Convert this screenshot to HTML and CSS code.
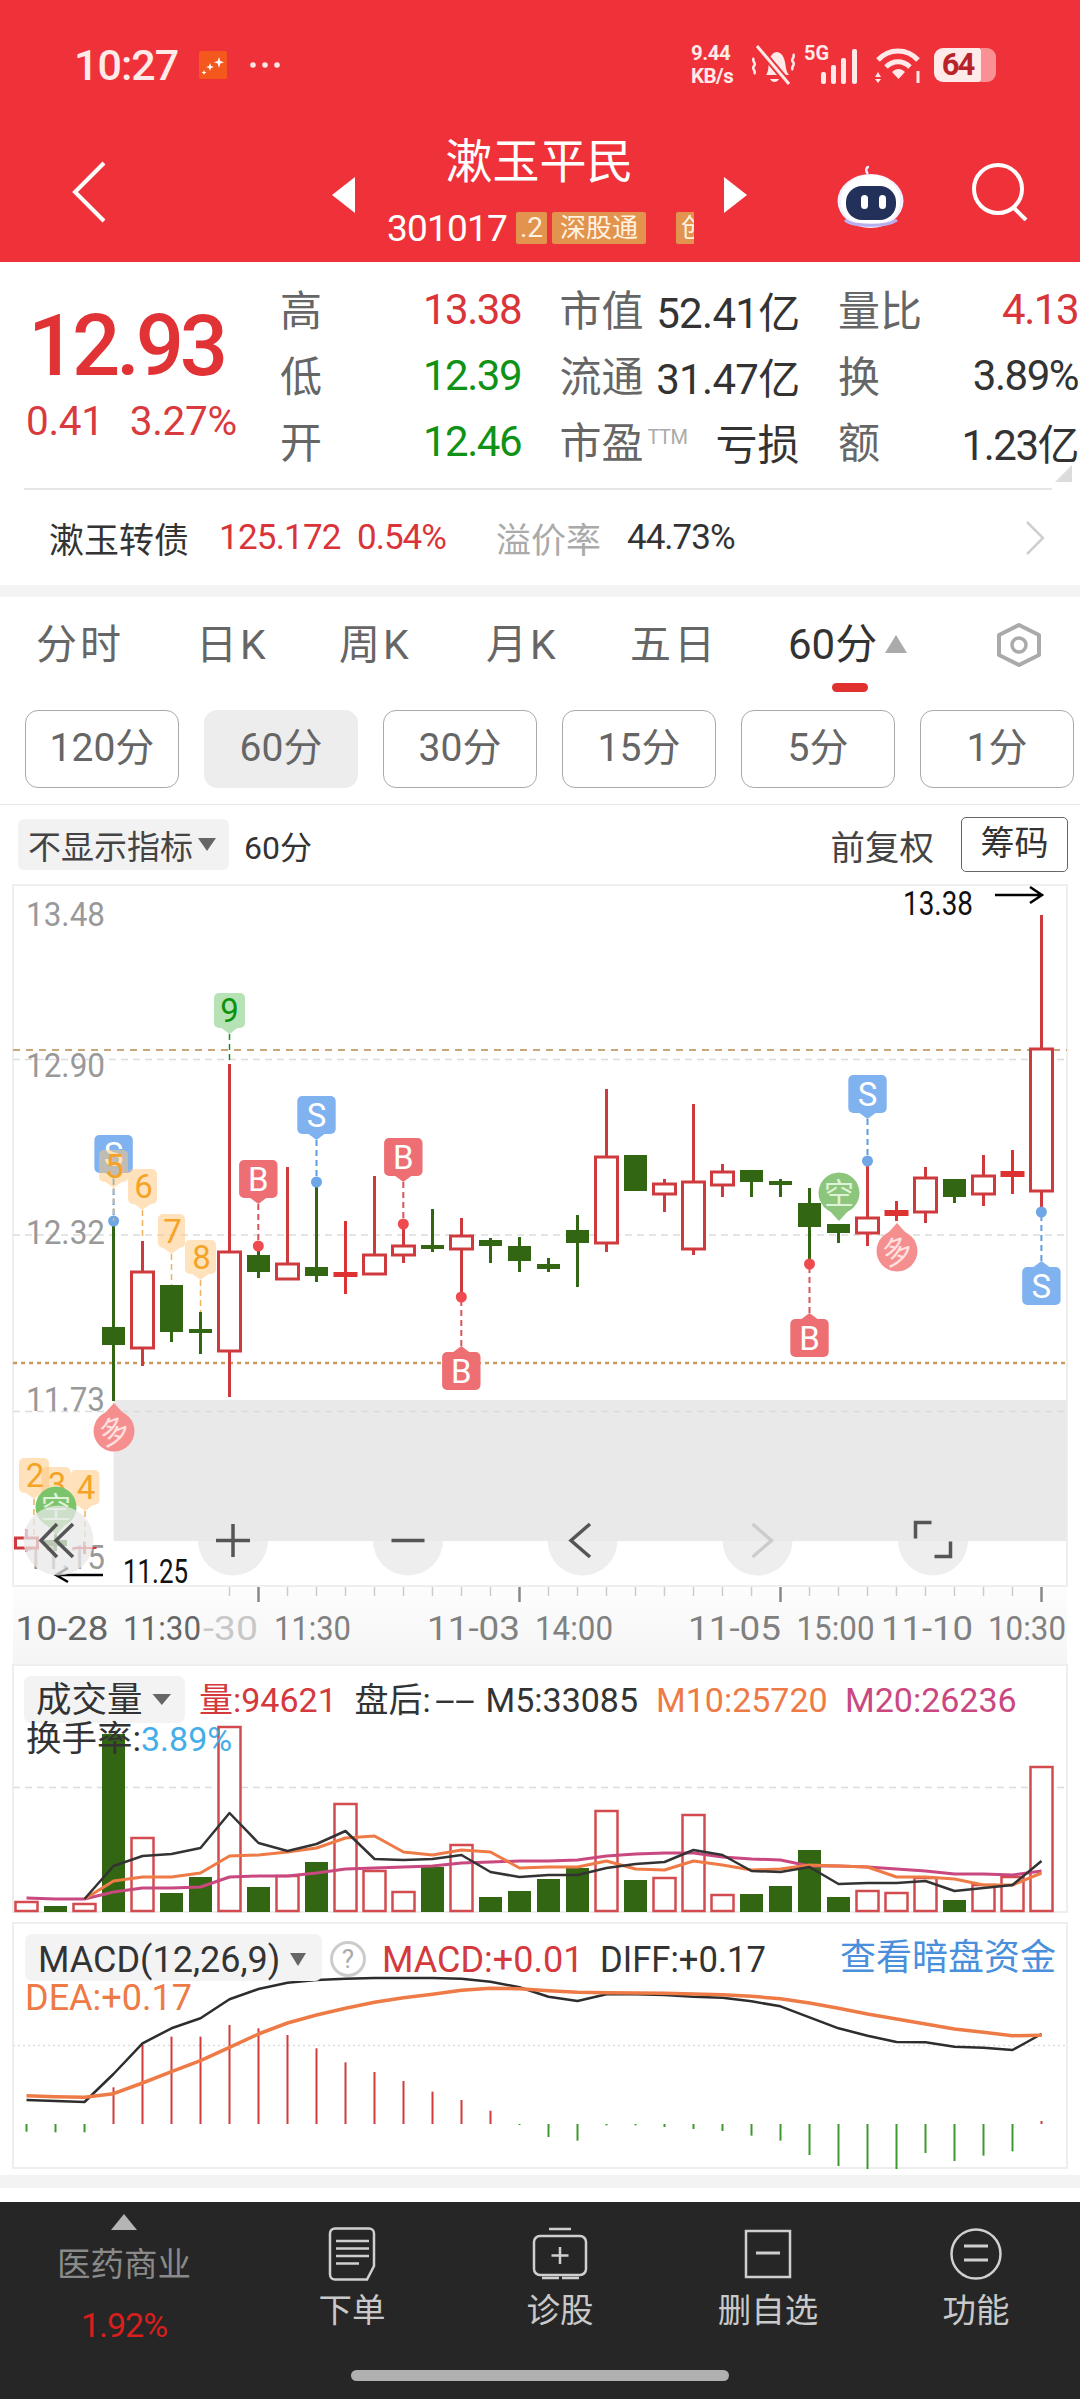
FILE: index.html
```html
<!DOCTYPE html>
<html lang="zh">
<head>
<meta charset="utf-8">
<title>漱玉平民</title>
<link rel="stylesheet" href="styles.css">
</head>
<body>
<div class="page">
  <header class="head">
    <div class="status">
      <span class="clock">10:27</span>
      <svg class="app-ico" width="28" height="28" viewBox="0 0 28 28"><rect width="28" height="28" rx="2" fill="#f4581c"/><path d="M20 6l1.3 4 3.7 1.300-3.700 1.300L20 17l-1.300-4.400-3.700-1.300 3.700-1.300zM11 12l1 3 3 1-3 1-1 3-1-3-3-1 3-1zM5 19l.7 1.800 1.800.7-1.800.7L5 24l-.7-1.800-1.800-.7 1.800-.7z" fill="#fff"/></svg>
      <svg class="dots" width="32" height="8" viewBox="0 0 32 8"><circle cx="4" cy="4" r="2.800" fill="#ffe6e6"/><circle cx="16" cy="4" r="2.800" fill="#ffe6e6"/><circle cx="28" cy="4" r="2.800" fill="#ffe6e6"/></svg>
      <div class="sys">
        <div class="net"><span>9.44</span><span>KB/s</span></div>
        <svg class="ico-bell" width="45" height="40" viewBox="0 0 45 40"><path d="M15 30c3-4 2-8 3-14 1-5 4-9 8-9 5 1 7 5 8 10 1 6 1 9 4 13z" fill="#ffe9e9"/><path d="M19 34c2 4 7 4 9 0z" fill="#ffe9e9"/><path d="M6 1l32 38" stroke="#ef3239" stroke-width="7"/><path d="M6 1l32 38" stroke="#ffe9e9" stroke-width="3"/><path d="M3 13c-3 3 3 5 0 8s3 5 0 8M42 9c3 3-3 5 0 8s-3 5 0 8" fill="none" stroke="#ffe9e9" stroke-width="2.500"/></svg>
        <svg class="ico-sig" width="58" height="52" viewBox="0 -6 58 52"><text class="fiveg" x="0" y="15">5G</text><rect x="17" y="27" width="5" height="12" rx="2" fill="#ffe9e9"/><rect x="27" y="20" width="5" height="19" rx="2" fill="#ffe9e9"/><rect x="37" y="13" width="5" height="26" rx="2" fill="#ffe9e9"/><rect x="48" y="4" width="5" height="35" rx="2" fill="#ffe9e9"/></svg>
        <svg class="ico-wifi" width="46" height="36" viewBox="0 0 46 36"><path d="M3 13C14 1 32 1 43 13" fill="none" stroke="#ffe9e9" stroke-width="5"/><path d="M11 20c7-7 17-7 24 0" fill="none" stroke="#ffe9e9" stroke-width="5"/><path d="M17 25c4-4 9-4 13 0l-6.500 7z" fill="#ffe9e9"/><path d="M3 25l3 5H0zM3 36l3-4H0z" fill="#ffe9e9"/><path d="M43 24v12" stroke="#ffe9e9" stroke-width="3"/></svg>
        <div class="batt"><span class="batt-fill">64</span><span class="batt-rest"></span></div>
      </div>
    </div>
    <div class="nav">
      <svg class="back" width="34" height="62" viewBox="0 0 34 62"><path d="M32 2L3 31l29 29" fill="none" stroke="#fff" stroke-width="4"/></svg>
      <div class="center">
        <svg class="tri" width="23" height="36" viewBox="0 0 23 36"><path d="M23 0v36L0 18z" fill="#fff"/></svg>
        <div class="mid">
          <div class="title">漱玉平民</div>
          <div class="code-row"><span class="code">301017</span><span class="tag tag-a">.2</span><span class="tag tag-b">深股通</span><span class="tag tag-c">创业板</span></div>
        </div>
        <svg class="tri" width="23" height="36" viewBox="0 0 23 36"><path d="M0 0v36l23-18z" fill="#fff"/></svg>
      </div>
      <div class="nav-right">
        <svg class="robot" width="67" height="63" viewBox="0 0 67 63"><path d="M31 9c-3-3-2-7 1-7" fill="none" stroke="#efe9ff" stroke-width="2.500"/><ellipse cx="33.500" cy="36" rx="33" ry="27" fill="#f2efff"/><path d="M4 36c0-15 12-26 29-26s30 11 30 26c0 14-13 25-30 25S4 50 4 36z" fill="#fff"/><rect x="9" y="21" width="50" height="34" rx="16" fill="#22305a"/><rect x="24" y="30" width="7" height="14" rx="3.500" fill="#fff"/><rect x="42" y="30" width="7" height="14" rx="3.500" fill="#fff"/><path d="M8 55c8 7 42 7 52 0" fill="none" stroke="#b9aef0" stroke-width="3"/></svg>
        <svg class="search" width="58" height="58" viewBox="0 0 58 58"><circle cx="27" cy="26" r="24" fill="none" stroke="#fff" stroke-width="4"/><path d="M42 44l13 13" stroke="#fff" stroke-width="4"/></svg>
      </div>
    </div>
  </header>

  <section class="quote">
    <div class="quote-top">
      <div class="price-block">
        <div class="price">12.93</div>
        <div class="change"><span>0.41</span><span>3.27%</span></div>
      </div>
      <div class="stats">
        <div class="cell"><span class="lb">高</span><span class="val red">13.38</span></div>
        <div class="cell"><span class="lb">市值</span><span class="val val-wide">52.41亿</span></div>
        <div class="cell"><span class="lb">量比</span><span class="val red">4.13</span></div>
        <div class="cell"><span class="lb">低</span><span class="val green">12.39</span></div>
        <div class="cell"><span class="lb">流通</span><span class="val val-wide">31.47亿</span></div>
        <div class="cell"><span class="lb">换</span><span class="val">3.89%</span></div>
        <div class="cell"><span class="lb">开</span><span class="val green">12.46</span></div>
        <div class="cell"><span class="lb">市盈<sup class="ttm">TTM</sup></span><span class="val val-cn">亏损</span></div>
        <div class="cell"><span class="lb">额</span><span class="val">1.23亿</span></div>
      </div>
      <svg class="corner" width="17" height="17" viewBox="0 0 17 17"><path d="M17 0v17H0z" fill="#dcdcdc"/></svg>
    </div>
    <div class="bond">
      <span class="bond-name">漱玉转债</span>
      <span class="bond-num">125.172</span>
      <span class="bond-pct">0.54%</span>
      <span class="bond-lb">溢价率</span>
      <span class="bond-val">44.73%</span>
      <svg class="bond-go" width="20" height="34" viewBox="0 0 20 34"><path d="M2 1l16 16L2 33" fill="none" stroke="#cfcfcf" stroke-width="2.500"/></svg>
    </div>
  </section>
  <div class="band"></div>

  <nav class="tabs">
    <span class="tab">分时</span>
    <span class="tab">日K</span>
    <span class="tab">周K</span>
    <span class="tab">月K</span>
    <span class="tab">五日</span>
    <span class="tab tab-on">60分<svg class="tab-tri" width="22" height="18" viewBox="0 0 22 18"><path d="M11 0l11 18H0z" fill="#aaa"/></svg></span>
    <svg class="hex" width="46" height="44" viewBox="0 0 46 44"><path d="M23 2l20 10v20L23 42 3 32V12z" fill="none" stroke="#aaa" stroke-width="4" stroke-linejoin="round"/><circle cx="23" cy="22" r="7" fill="none" stroke="#aaa" stroke-width="3.500"/></svg>
    <i class="tab-pill"></i>
  </nav>

  <div class="periods">
    <span class="period">120分</span>
    <span class="period period-on">60分</span>
    <span class="period">30分</span>
    <span class="period">15分</span>
    <span class="period">5分</span>
    <span class="period">1分</span>
  </div>

  <div class="ind-row">
    <div class="ind-chip">不显示指标<svg width="18" height="13" viewBox="0 0 18 13"><path d="M0 0h18L9 13z" fill="#666"/></svg></div>
    <span class="ind-per">60分</span>
    <span class="ind-fq">前复权</span>
    <span class="ind-btn">筹码</span>
  </div>

  <svg id="chart" class="chart" width="1080" height="1291" viewBox="0 885 1080 1291">
    <defs>
      <linearGradient id="strip" x1="0" y1="0" x2="0" y2="1"><stop offset="0" stop-color="#fdfdfd"/><stop offset="1" stop-color="#f5f5f5"/></linearGradient>
    </defs>
    <rect class="frame" x="13" y="886" width="1054" height="701"/>
    <rect class="shade" x="113.600" y="1401" width="953" height="141"/>
    <rect x="13" y="1588" width="1054" height="77" fill="url(#strip)"/>
    <path class="grid" d="M13 1060.500H1067M13 1236H1067M13 1412.500H1067"/>
    <path class="ref-a" d="M13 1051H1067"/>
    <path class="ref-b" d="M13 1364H1067"/>
    <text class="axis" x="26" y="927" textLength="79" lengthAdjust="spacingAndGlyphs">13.48</text>
    <text class="axis" x="26" y="1078" textLength="79" lengthAdjust="spacingAndGlyphs">12.90</text>
    <text class="axis" x="26" y="1245" textLength="79" lengthAdjust="spacingAndGlyphs">12.32</text>
    <text class="axis" x="26" y="1412" textLength="79" lengthAdjust="spacingAndGlyphs">11.73</text>
    <text class="axis" x="26" y="1570" textLength="79" lengthAdjust="spacingAndGlyphs">11.15</text>
    <g id="ticks"></g>
    <g id="candles"></g>
    <g id="marks"></g>
    <text class="extreme" x="903" y="916" textLength="70" lengthAdjust="spacingAndGlyphs">13.38</text>
    <path class="arrow" d="M995 896h46M1030 888l12 8-12 8"/>
    <text class="extreme" x="123" y="1584" textLength="65" lengthAdjust="spacingAndGlyphs">11.25</text>
    <path class="arrow" d="M103 1576H57M68 1569l-12 7 12 7"/>

    <g class="btns">
      <circle cx="58.500" cy="1541.500" r="35"/><circle cx="233" cy="1541.500" r="35"/><circle cx="408" cy="1541.500" r="35"/><circle cx="582.500" cy="1541.500" r="35"/><circle cx="757.500" cy="1541.500" r="35"/><circle cx="933" cy="1541.500" r="35"/>
    </g>
    <path class="btn-ico" d="M57 1525l-16 16.500 16 16.500M73 1525l-17 16.500 17 16.500M216 1541.500h34M233 1525v33M391.500 1541.500h33M590 1525l-19 16.500 19 16.500M931.500 1523.500h-16v16M934.500 1557.500h16v-15"/>
    <path class="btn-off" d="M752.500 1525l19 16.500-19 16.500"/>

    <text class="t-time" x="15.500" y="1641" textLength="93" lengthAdjust="spacingAndGlyphs">10-28</text>
    <text class="t-time" x="123" y="1641" textLength="78" lengthAdjust="spacingAndGlyphs">11:30</text>
    <text class="t-time t-fade" x="203" y="1641" textLength="55" lengthAdjust="spacingAndGlyphs">-30</text>
    <text class="t-time t-mid" x="274" y="1641" textLength="77" lengthAdjust="spacingAndGlyphs">11:30</text>
    <text class="t-time t-mid" x="427" y="1641" textLength="93" lengthAdjust="spacingAndGlyphs">11-03</text>
    <text class="t-time t-mid" x="535" y="1641" textLength="78" lengthAdjust="spacingAndGlyphs">14:00</text>
    <text class="t-time t-mid" x="688" y="1641" textLength="93" lengthAdjust="spacingAndGlyphs">11-05</text>
    <text class="t-time t-mid" x="796.500" y="1641" textLength="78" lengthAdjust="spacingAndGlyphs">15:00</text>
    <text class="t-time t-mid" x="881" y="1641" textLength="92" lengthAdjust="spacingAndGlyphs">11-10</text>
    <text class="t-time t-mid" x="988" y="1641" textLength="78" lengthAdjust="spacingAndGlyphs">10:30</text>

    <rect class="frame" x="13" y="1666" width="1054" height="247"/>
    <path class="grid" d="M13 1788.500H1067"/>
    <g id="vol"></g>
    <rect class="chip" x="24" y="1677" width="161" height="47" rx="7"/>
    <text class="p-t p-cn" x="36" y="1713">成交量</text>
    <path class="chip-arrow" d="M152.500 1695h18.500l-9.200 11z"/>
    <text class="p-t t-red" x="199" y="1713">量:94621</text>
    <text class="p-t" x="354.500" y="1713">盘后:</text>
    <text class="p-t" x="435" y="1713" textLength="40" lengthAdjust="spacingAndGlyphs">--</text>
    <text class="p-t" x="485.500" y="1713">M5:33085</text>
    <text class="p-t t-org" x="656" y="1713">M10:25720</text>
    <text class="p-t t-mag" x="845" y="1713">M20:26236</text>
    <text class="p-t p-cn" x="26" y="1752">换手率:<tspan class="t-blue p-num" x="141">3.89%</tspan></text>

    <rect class="frame" x="13" y="1924" width="1054" height="245"/>
    <path class="grid-dot" d="M13 2046.500H1067"/>
    <g id="macd"></g>
    <rect class="chip" x="25" y="1935" width="297" height="47" rx="7"/>
    <text class="p-m" x="38" y="1973">MACD(12,26,9)</text>
    <path class="chip-arrow" d="M290 1954h16l-8 13z"/>
    <circle class="help" cx="348" cy="1960" r="16.500"/>
    <text class="help-t" x="348" y="1969">?</text>
    <text class="p-m t-red" x="382" y="1973">MACD:+0.01</text>
    <text class="p-m" x="600" y="1973" textLength="166" lengthAdjust="spacingAndGlyphs">DIFF:+0.17</text>
    <text class="p-link" x="840" y="1971">查看暗盘资金</text>
    <text class="p-m t-org" x="25" y="2011">DEA:+0.17</text>
  </svg>

  <div class="band band-b"></div>
  <div class="gap"></div>

  <footer class="foot">
    <div class="foot-row">
      <div class="f-sector">
        <svg width="26" height="16" viewBox="0 0 26 16"><path d="M13 0l13 16H0z" fill="#b5b5b5"/></svg>
        <span class="f-name">医药商业</span>
        <span class="f-pct">1.92%</span>
      </div>
      <div class="f-item">
        <svg class="f-ico" width="48" height="54" viewBox="0 0 48 54"><path d="M7 1.500h34a5 5 0 0 1 5 5V39l-7 13.500H7a5 5 0 0 1-5-5v-41a5 5 0 0 1 5-5z" fill="none" stroke="#cfcfcf" stroke-width="2.500"/><path d="M8 14h33M8 21.500h33M8 29h33M8 36.500h23" stroke="#cfcfcf" stroke-width="2.500"/></svg>
        <span>下单</span>
      </div>
      <div class="f-item">
        <svg class="f-ico" width="56" height="54" viewBox="0 0 56 54"><path d="M17 2h22M8 9h40a6 6 0 0 1 6 6v27a6 6 0 0 1-6 6H8a6 6 0 0 1-6-6V15a6 6 0 0 1 6-6zM10 51h17M30 51h17M28 20v17M19.500 28.500h17" fill="none" stroke="#cfcfcf" stroke-width="2.500"/></svg>
        <span>诊股</span>
      </div>
      <div class="f-item">
        <svg class="f-ico" width="48" height="54" viewBox="0 0 48 54"><path d="M2 4h44v46H2z" fill="none" stroke="#cfcfcf" stroke-width="2.500"/><path d="M12 26h24" stroke="#cfcfcf" stroke-width="3"/></svg>
        <span>删自选</span>
      </div>
      <div class="f-item">
        <svg class="f-ico" width="52" height="54" viewBox="0 0 52 54"><circle cx="26" cy="27" r="24.500" fill="none" stroke="#cfcfcf" stroke-width="2.500"/><path d="M14 19h24M14 33h24" stroke="#cfcfcf" stroke-width="3"/></svg>
        <span>功能</span>
      </div>
    </div>
    <div class="homebar"></div>
  </footer>
</div>
<script src="chart.js"></script>
</body>
</html>
```
FILE: styles.css
```css
* { box-sizing: border-box; }
html, body { margin: 0; padding: 0; background: #fff; }
body { font-family: Roboto, "Noto Sans CJK SC", sans-serif; color: #333; }
.page { width: 1080px; height: 2400px; overflow: hidden; }

.head { height: 262px; background: #ef3239; color: #fff; }
.status { height: 130px; display: flex; align-items: center; padding: 0 81px 0 74px; }
.clock { font-size: 43px; letter-spacing: -1px; font-weight: 500; color: #ffeaea; }
.app-ico { margin-left: 21px; }
.dots { margin-left: 22px; }
.sys { margin-left: auto; display: flex; align-items: center; gap: 8px; }
.net { width: 46px; display: flex; flex-direction: column; font-size: 20.500px; font-weight: 700; line-height: 23px; color: #ffe9e9; letter-spacing: -.5px; white-space: nowrap; }
.ico-bell { margin-left: 6px; }
.ico-wifi { margin-left: 5px; }
.fiveg { font: 700 20px Roboto, sans-serif; fill: #ffe9e9; }
.batt { margin-left: 5px; display: flex; height: 34px; width: 65px; }
.batt-fill { width: 47px; background: #ffeaea; border-radius: 9px 2px 2px 9px; color: #b8232a; font-size: 31px; font-weight: 700; line-height: 34px; text-align: center; letter-spacing: -2px; }
.batt-rest { width: 15px; background: #fa9094; border-radius: 0 9px 9px 0; margin-right: 3px; }

.nav { height: 132px; display: grid; grid-template-columns: 332px 415px 1fr; align-items: center; }
.back { margin: -8px 0 0 72px; }
.center { display: flex; align-items: center; align-self: stretch; }
.tri { margin-top: -3px; }
.mid { flex: 1; text-align: center; align-self: flex-start; }
.title { font-size: 47px; line-height: 58px; margin-top: 3px; }
.code-row { display: flex; align-items: center; height: 32px; margin-top: 21px; padding-left: 32px; }
.code { font-size: 37px; letter-spacing: -.8px; width: 129px; text-align: left; }
.tag { height: 32px; background: #e2944f; color: #fff3e0; border-radius: 2px; font-size: 26px; line-height: 32px; overflow: hidden; white-space: nowrap; }
.tag-a { width: 31px; text-align: right; padding-right: 4px; font-size: 28px; }
.tag-b { width: 94px; margin-left: 5px; }
.tag-c { width: 18px; margin-left: 30px; padding-left: 5px; text-align: left; border-radius: 2px 0 0 2px; }
.nav-right { display: flex; align-items: center; padding-left: 90px; }
.search { margin-left: 67px; margin-top: -8px; }

.quote { height: 323px; }
.quote-top { position: relative; height: 228px; display: flex; margin: 0 28px 0 0; border-bottom: 0; }
.quote-top::after { content: ""; position: absolute; left: 24px; right: 0; bottom: 0; height: 2px; background: #e6e6e6; }
.price-block { width: 282px; padding: 42px 0 0 28px; flex: none; }
.price { font-size: 85px; line-height: 84px; letter-spacing: -4.200px; color: #e13236; font-weight: 500; }
.change { display: flex; gap: 26px; margin: 11px 0 0 -2px; font-size: 40.500px; line-height: 44px; color: #d83a3e; letter-spacing: -.3px; }
.stats { flex: none; width: 796px; padding-top: 14px; display: grid; grid-template-columns: 239px 238px 238px; column-gap: 40.500px; grid-auto-rows: 66px; }
.cell { display: flex; justify-content: space-between; align-items: center; }
.lb { font-size: 42px; margin: -4px 0 0 -2px; color: #666; white-space: nowrap; }
.val { font-size: 42px; letter-spacing: -1.500px; color: #333; white-space: nowrap; }
.val-wide { letter-spacing: -.7px; }
.val-cn { letter-spacing: 0; font-size: 42px; }
.red { color: #d9343a; }
.green { color: #0f9215; }
.ttm { font-size: 20px; color: #aaa; vertical-align: 14px; line-height: 0; margin-left: 4px; letter-spacing: -.5px; }
.corner { position: absolute; right: -20px; top: 203px; }
.bond { height: 95px; display: flex; align-items: center; padding: 0 35px 0 49px; white-space: nowrap; }
.bond-name { font-size: 35px; color: #333; }
.bond-num { margin-left: 30px; font-size: 35px; color: #d9343a; letter-spacing: -.8px; width: 138px; }
.bond-pct { font-size: 35px; color: #d9343a; letter-spacing: -1px; width: 139px; }
.bond-lb { font-size: 35px; color: #aaa; width: 131px; }
.bond-val { font-size: 35px; color: #333; letter-spacing: -1px; }
.bond-go { margin-left: auto; }
.band { height: 12px; background: #f3f3f3; }

.tabs { position: relative; height: 113px; display: grid; grid-template-columns: 160px 143px 147px 144px 158px 208px auto; padding-left: 36px; font-size: 41px; line-height: 96px; color: #666; }
.tab { letter-spacing: 3px; white-space: nowrap; }
.tab-on { color: #333; letter-spacing: 0; font-size: 42px; }
.tab-tri { margin-left: 8px; vertical-align: 6px; }
.hex { margin-top: 26px; }
.tab-pill { position: absolute; left: 832px; top: 86px; width: 36px; height: 9px; border-radius: 5px; background: #e1312f; }

.periods { height: 95px; display: flex; gap: 25px; padding-left: 25px; border-bottom: 1.500px solid #e8e8e8; }
.period { width: 154px; height: 78px; border: 1.500px solid #aaa; border-radius: 13px; text-align: center; font-size: 39px; line-height: 75px; color: #666; }
.period-on { background: #ededed; border-color: #ededed; }

.ind-row { height: 79px; display: flex; align-items: center; padding: 0 12px 0 18px; }
.ind-chip { width: 211px; height: 51px; background: #f2f2f2; border-radius: 6px; display: flex; align-items: center; padding-left: 10px; font-size: 33px; color: #444; white-space: nowrap; }
.ind-chip svg { margin-left: 5px; }
.ind-per { margin-left: 15px; font-size: 32px; color: #333; }
.ind-fq { margin-left: auto; font-size: 34.500px; color: #444; }
.ind-btn { margin-left: 27px; width: 107px; height: 55px; border: 1.500px solid #666; border-radius: 5px; text-align: center; font-size: 34px; line-height: 50px; color: #333; }

.chart { display: block; }
.frame { fill: #fff; stroke: #eee; stroke-width: 2; }
.shade { fill: #e9e9e9; }
.grid { fill: none; stroke: #dcdcdc; stroke-width: 1.500; stroke-dasharray: 7 5; }
.grid-dot { fill: none; stroke: #ddd; stroke-width: 1.500; stroke-dasharray: 2 3; }
.ref-a { fill: none; stroke: #c8a878; stroke-width: 2; stroke-dasharray: 7 6; }
.ref-b { fill: none; stroke: #cb9a5c; stroke-width: 2.500; stroke-dasharray: 4 4; }
.axis { font: 34px Roboto, sans-serif; fill: #999; }
.extreme { font: 33px Roboto, sans-serif; fill: #111; }
.arrow { fill: none; stroke: #000; stroke-width: 2.500; }
.btns circle { fill: #e8e8e8; fill-opacity: .75; }
.btn-ico { fill: none; stroke: #555; stroke-width: 3.500; }
.btn-off { fill: none; stroke: #ccc; stroke-width: 3.500; }
.t-time { font: 34px Roboto, sans-serif; fill: #666; }
.t-mid { fill: #808080; }
.t-fade { fill: #c8c8c8; }
.chip { fill: #f3f3f3; }
.chip-arrow { fill: #666; }
.p-t { font: 34px Roboto, "Noto Sans CJK SC", sans-serif; fill: #333; }
.p-cn { font-size: 35.500px; }
.p-num { font-size: 34px; }
.p-m { font: 36px Roboto, sans-serif; fill: #333; }
.p-link { font: 36px "Noto Sans CJK SC", sans-serif; fill: #4a8fdb; }
.t-red { fill: #d3393d; }
.t-org { fill: #ee7a46; }
.t-mag { fill: #c9487f; }
.t-blue { fill: #45aee8; }
.help { fill: #fff; stroke: #ccc; stroke-width: 3; }
.help-t { font: 26px Roboto, sans-serif; fill: #aaa; text-anchor: middle; }
.c-red { fill: #fff; stroke: #cf3a3e; stroke-width: 3; }
.c-wick-red { stroke: #cf3a3e; stroke-width: 3; }
.c-cross-red { stroke: #de3131; stroke-width: 3; }
.c-green { fill: #336613; }
.c-wick-green { stroke: #336613; stroke-width: 3; }
.tick-min { stroke: #ccc; stroke-width: 1.500; }
.tick-maj { stroke: #888; stroke-width: 2.500; }
.mk-text { font: 33px Roboto, sans-serif; text-anchor: middle; }
.mk-cn { font: 30px "Noto Sans CJK SC", sans-serif; text-anchor: middle; }
.v-red { fill: #fff; stroke: #d24b4f; stroke-width: 2.500; }
.v-green { fill: #336613; }
.l-m5 { fill: none; stroke: #333; stroke-width: 2.500; }
.l-m10 { fill: none; stroke: #ee7a46; stroke-width: 3; }
.l-m20 { fill: none; stroke: #c9487f; stroke-width: 3; }
.l-diff { fill: none; stroke: #2d2d2d; stroke-width: 2.500; }
.l-dea { fill: none; stroke: #ee7a46; stroke-width: 3.500; }
.m-red { stroke: #d23b3b; stroke-width: 2; }
.m-green { stroke: #3c9a2c; stroke-width: 2; }

.band-b { height: 13px; }
.gap { height: 14px; background: #fff; }
.foot { height: 197px; background: #262626; }
.foot-row { height: 168px; display: grid; grid-template-columns: 248px repeat(4, 208px); }
.f-sector { display: flex; flex-direction: column; align-items: center; padding-top: 12px; }
.f-name { margin-top: 12px; font-size: 33.500px; line-height: 46px; color: #8a8a8a; }
.f-pct { margin-top: 14px; font-size: 34px; line-height: 46px; color: #d91e1e; letter-spacing: -1px; }
.f-item { display: flex; flex-direction: column; align-items: center; padding-top: 25px; font-size: 33.500px; line-height: 46px; color: #c9c9c9; }
.f-ico { display: block; margin-bottom: 7px; }
.homebar { width: 378px; height: 11px; margin: 0 auto; border-radius: 6px; background: #b0b0b0; }
```
FILE: chart.js
```js
(function () {
  var NS = 'http://www.w3.org/2000/svg';
  function X(i) { return 26.5 + 29 * i; }
  function el(parent, name, attrs, text) {
    var n = document.createElementNS(NS, name);
    for (var k in attrs) n.setAttribute(k, attrs[k]);
    if (text) n.textContent = text;
    parent.appendChild(n);
    return n;
  }
  function byId(id) { return document.getElementById(id); }

  /* colour, high, body top, body bottom, low */
  var K = [
    ['r',1530,1539,1549,1553],['g',1535,1541,1547,1552],['x',1543,1548,1550,1555],
    ['g',1227,1328,1346,1402],['r',1242,1273,1349,1367],['g',1286,1286,1333,1343],
    ['c',1313,1330,1334,1355],['r',1065,1253,1352,1398],['g',1247,1256,1273,1279],
    ['r',1168,1265,1280,1280],['g',1183,1268,1277,1283],['x',1222,1273,1278,1295],
    ['r',1177,1256,1275,1276],['r',1225,1247,1256,1264],['c',1210,1246,1250,1253],
    ['r',1219,1237,1250,1297],['g',1239,1241,1247,1264],['g',1238,1247,1262,1273],
    ['c',1259,1265,1270,1273],['g',1216,1231,1244,1288],['r',1090,1158,1244,1253],
    ['g',1156,1156,1192,1192],['r',1180,1185,1195,1213],['r',1105,1183,1250,1256],
    ['r',1165,1173,1186,1198],['g',1171,1171,1183,1198],['c',1180,1182,1186,1198],
    ['g',1189,1204,1228,1265],['g',1225,1225,1234,1244],['r',1162,1219,1234,1247],
    ['x',1202,1211,1217,1222],['r',1168,1179,1213,1224],['g',1180,1180,1198,1204],
    ['r',1156,1177,1195,1207],['x',1151,1172,1178,1195],['r',916,1050,1192,1213]
  ];
  var kg = byId('candles');
  K.forEach(function (c, i) {
    var x = X(i), t = c[0];
    var wick = (t === 'r') ? 'c-wick-red' : (t === 'x') ? 'c-cross-red' : 'c-wick-green';
    var fade = i < 3 ? .9 : 1;
    el(kg, 'line', { x1: x, x2: x, y1: c[1], y2: c[4], 'class': wick, opacity: fade });
    if (t === 'r') el(kg, 'rect', { x: x - 11, y: c[2], width: 22, height: c[3] - c[2], 'class': 'c-red' });
    else if (t === 'x') el(kg, 'rect', { x: x - 12, y: c[2], width: 24, height: c[3] - c[2], fill: '#de3131' });
    else el(kg, 'rect', { x: x - 11.5, y: c[2], width: 23, height: c[3] - c[2], 'class': 'c-green' });
  });

  var tg = byId('ticks');
  for (var i = 7; i < 36; i++) {
    var major = (i === 8 || i === 17 || i === 26 || i === 35);
    el(tg, 'line', { x1: X(i), x2: X(i), y1: 1588, y2: major ? 1603 : 1597, 'class': major ? 'tick-maj' : 'tick-min' });
  }

  var C = {
    B: { fill: '#ee6f73', text: '#fff', line: '#d9555a', dot: '#ee4a50' },
    S: { fill: '#80b2f0', text: '#fff', line: '#5f9de0', dot: '#6ea6e6' },
    O: { fill: '#ffc77a', op: .5, text: '#f5a327', line: '#efb35e' },
    N: { fill: '#b6e2b6', text: '#0b930b', line: '#1f8a2a' }
  };
  var mg = byId('marks');
  /* label above (dir 1) or below (dir -1) the point at y2 */
  function tag(cx, top, bottom, ch, kind, dir, y2, dot, w) {
    var s = C[kind], hw = (w || 38.4) / 2;
    var tipY = dir > 0 ? bottom + 6 : top - 6;
    if (y2 !== null) el(mg, 'line', { x1: cx, x2: cx, y1: tipY, y2: y2, stroke: s.line, 'stroke-width': kind === 'O' || kind === 'N' ? 1.5 : 2, 'stroke-dasharray': '6 4' });
    if (dot) el(mg, 'circle', { cx: cx, cy: y2, r: 5.5, fill: s.dot });
    var g = el(mg, 'g', { opacity: s.op || 1 });
    el(g, 'rect', { x: cx - hw, y: top, width: hw * 2, height: bottom - top, rx: 5, fill: s.fill });
    var base = dir > 0 ? bottom : top;
    el(g, 'path', { d: 'M' + (cx - 8) + ' ' + base + 'L' + cx + ' ' + tipY + 'L' + (cx + 8) + ' ' + base + 'z', fill: s.fill });
    el(mg, 'text', { x: cx + (kind === 'O' ? 1 : 0), y: (top + bottom) / 2 + 11.5, 'class': 'mk-text', fill: s.text }, ch);
  }
  function drop(cx, cy, ch, fill, textFill, dir, op) {
    var g = el(mg, 'g', { opacity: op || 1 });
    var tip = cy + dir * 28;
    el(g, 'circle', { cx: cx, cy: cy, r: 20.5, fill: fill });
    el(g, 'path', { d: 'M' + (cx - 10) + ' ' + (cy + dir * 17) + 'L' + cx + ' ' + tip + 'L' + (cx + 10) + ' ' + (cy + dir * 17) + 'z', fill: fill });
    el(g, 'text', { x: cx, y: cy + 11, 'class': 'mk-cn', fill: textFill, transform: ch === '多' ? 'rotate(-20 ' + cx + ' ' + cy + ')' : '' }, ch);
  }

  tag(113.6, 1136, 1174, 'S', 'S', 1, 1222, true);
  tag(113.6, 1151, 1183, '5', 'O', 1, 1222, false, 29);
  tag(142.5, 1170, 1205, '6', 'O', 1, 1241, false, 29);
  tag(171.5, 1215, 1249, '7', 'O', 1, 1286, false, 27);
  tag(200.5, 1241, 1275, '8', 'O', 1, 1313, false, 31);
  tag(229.5, 994, 1029, '9', 'N', 1, 1065, false, 31);
  tag(258.3, 1161, 1199, 'B', 'B', 1, 1247, true);
  tag(316.5, 1097, 1135, 'S', 'S', 1, 1183, true);
  tag(403.3, 1139, 1177, 'B', 'B', 1, 1225, true);
  tag(461.3, 1353, 1391, 'B', 'B', -1, 1298, true);
  tag(809.5, 1320, 1358, 'B', 'B', -1, 1265, true);
  tag(867.5, 1076, 1114, 'S', 'S', 1, 1162, true);
  tag(1041.4, 1268, 1306, 'S', 'S', -1, 1213, true);
  drop(114, 1432, '多', '#f58f8f', '#ffe1e1', -1);
  drop(897, 1252, '多', '#f58f8f', '#ffe1e1', -1);
  drop(839, 1194, '空', '#8cc67c', '#dff2d8', 1);
  tag(34, 1459, 1494, '2', 'O', 1, 1538, false, 30);
  tag(56, 1468, 1503, '3', 'O', 1, null, false, 29);
  tag(85, 1471, 1506, '4', 'O', 1, 1546, false, 29);
  drop(56, 1508, '空', '#7cc46c', '#dff2d8', 1);

  /* volume bars */
  var V = [[1903,0],[1907,1],[1905,0],[1735,1],[1839,0],[1894,1],[1878,1],[1728,0],[1888,1],[1877,0],[1863,1],[1805,0],
    [1872,0],[1893,0],[1868,1],[1846,0],[1898,1],[1892,1],[1880,1],[1869,1],[1812,0],[1881,1],[1879,0],[1816,0],
    [1896,0],[1895,1],[1887,1],[1851,1],[1898,1],[1892,0],[1894,0],[1879,0],[1901,1],[1886,0],[1878,0],[1768,0]];
  var vg = byId('vol');
  V.forEach(function (v, i) {
    var x = X(i);
    if (v[1]) el(vg, 'rect', { x: x - 11.5, y: v[0], width: 23, height: 1913 - v[0], 'class': 'v-green' });
    else el(vg, 'rect', { x: x - 11, y: v[0], width: 22, height: 1912 - v[0], 'class': 'v-red' });
  });
  function line(g, ys, cls, from, base, scale) {
    var pts = ys.map(function (y, i) {
      return X(i + (from || 0)).toFixed(1) + ',' + ((base || 0) + y * (scale || 1)).toFixed(1);
    }).join(' ');
    el(g, 'polyline', { points: pts, 'class': cls, 'stroke-linejoin': 'round' });
  }
  line(vg, [1899,1900,1900,1893,1889,1889,1888,1878,1877,1877,1874,1870,1869,1868,1867,1864,1863,1862,1862,1861,1857,1855,1854,1854,1858,1860,1861,1867,1867,1868,1870,1872,1875,1875,1876,1872], 'l-m20');
  line(vg, [1900,1882,1878,1878,1874,1857,1856,1853,1849,1839,1837,1853,1856,1851,1853,1869,1868,1868,1862,1870,1871,1862,1866,1871,1870,1866,1867,1868,1878,1878,1880,1886,1886,1874], 'l-m10', 2);
  line(vg, [1900,1867,1857,1855,1849,1814,1844,1852,1845,1832,1860,1861,1860,1856,1873,1878,1876,1876,1869,1865,1863,1851,1856,1872,1873,1868,1885,1884,1884,1882,1892,1889,1886,1862], 'l-m5', 2);

  /* MACD: end of each bar, measured from the zero line at z=615 (y = 1920 + z / 3) */
  var M = [638,640,640,505,378,353,353,318,328,348,388,430,459,486,518,543,575,618,654,665,619,619,624,630,636,650,665,708,741,750,750,702,726,710,697,606];
  var mg2 = byId('macd');
  M.forEach(function (z, i) {
    var up = z < 615;
    el(mg2, 'line', { x1: X(i), x2: X(i), y1: 2125, y2: 1920 + z / 3, 'class': up ? 'm-red' : 'm-green' });
  });
  line(mg2, [543,546,549,465,373,328,298,241,210,191,183,179,177,177,177,179,188,205,233,246,226,226,228,233,236,247,262,295,328,350,369,370,383,386,393,345], 'l-diff', 0, 1920, 1 / 3);
  line(mg2, [530,533,535,524,492,458,425,385,345,312,288,268,250,236,226,214,208,209,215,220,221,222,223,225,227,232,239,252,268,285,300,315,330,340,350,349], 'l-dea', 0, 1920, 1 / 3);
})();
```
